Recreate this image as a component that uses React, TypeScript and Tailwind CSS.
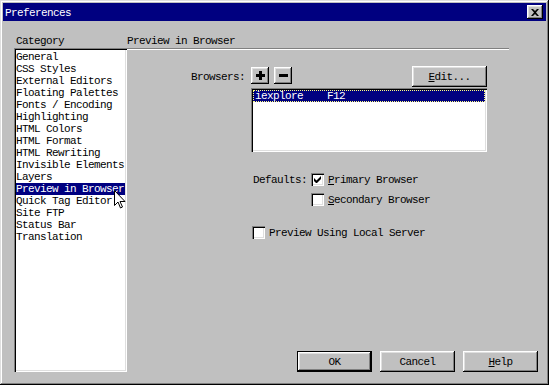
const raised =
  "shadow-[inset_-1px_-1px_#000,inset_1px_1px_#fff,inset_-2px_-2px_#808080,inset_2px_2px_#dfdfdf]";
const sunken =
  "shadow-[inset_1px_1px_#808080,inset_2px_2px_#000,inset_-1px_-1px_#fff,inset_-2px_-2px_#dfdfdf]";

const categories = [
  "General",
  "CSS Styles",
  "External Editors",
  "Floating Palettes",
  "Fonts / Encoding",
  "Highlighting",
  "HTML Colors",
  "HTML Format",
  "HTML Rewriting",
  "Invisible Elements",
  "Layers",
  "Preview in Browser",
  "Quick Tag Editor",
  "Site FTP",
  "Status Bar",
  "Translation",
];

function Checkbox({ checked }: { checked?: boolean }) {
  return (
    <div className={`relative h-[13px] w-[13px] shrink-0 bg-white ${sunken}`}>
      {checked && (
        <svg className="absolute left-[3px] top-[3px]" width="7" height="7" viewBox="0 0 7 7">
          <path d="M0 2v3l2 2h1l4-4V0L2.5 4.5z" fill="#000" />
        </svg>
      )}
    </div>
  );
}

function Button({ children, isDefault }: { children: React.ReactNode; isDefault?: boolean }) {
  return (
    <div
      className={`flex h-[21px] w-[75px] items-center justify-center bg-[#c0c0c0] pt-[1px] ${
        isDefault ? "border border-black" : ""
      } ${raised}`}
    >
      {children}
    </div>
  );
}

export default function App() {
  return (
    <div className="relative flex h-[385px] w-[549px] flex-col bg-[#c0c0c0] p-[3px] font-['Liberation_Mono',monospace] text-[11px] leading-[12px] tracking-[-0.6px] text-black shadow-[inset_-1px_-1px_#000,inset_1px_1px_#dfdfdf,inset_-2px_-2px_#808080,inset_2px_2px_#fff]">
      {/* title bar */}
      <div className="flex h-[18px] items-center justify-between bg-[#000080] pl-[2px] pr-[3px] text-white">
        <span className="pt-[1px]">Preferences</span>
        <div className={`flex h-[14px] w-[16px] items-center justify-center bg-[#c0c0c0] ${raised}`}>
          <svg width="8" height="7" viewBox="0 0 8 7">
            <path d="M0 0h2l2 2 2-2h2L5 3.5 8 7H6L4 5 2 7H0l3-3.5z" fill="#000" />
          </svg>
        </div>
      </div>

      <div className="flex flex-1">
        {/* category column */}
        <div className="ml-[11px] flex flex-col pt-[13px]">
          <div className="h-[12px] pl-[2px] pt-[1px]">Category</div>
          <div className={`mt-[2px] h-[324px] w-[113px] bg-white px-[2px] pt-[3px] ${sunken}`}>
            {categories.map((c) => (
              <div
                key={c}
                className={`h-[12px] whitespace-nowrap ${
                  c === "Preview in Browser" ? "bg-[#000080] text-white" : ""
                }`}
              >
                {c}
              </div>
            ))}
          </div>
        </div>

        {/* settings panel */}
        <div className="flex flex-1 flex-col pt-[13px]">
          <div className="h-[12px] pt-[1px]">Preview in Browser</div>
          <div className="mt-[2px] h-[2px] w-[382px] border-t border-b border-t-[#808080] border-b-white" />

          <div className="mt-[16px] flex h-[21px] items-start">
            <div className="mt-[5px] w-[118px] text-right">Browsers:</div>
            <div className={`ml-[6px] mt-[1px] flex h-[17px] w-[18px] items-center justify-center ${raised}`}>
              <svg width="9" height="9" viewBox="0 0 9 9">
                <path d="M3 0h3v3h3v3H6v3H3V6H0V3h3z" fill="#000" />
              </svg>
            </div>
            <div className={`ml-[5px] mt-[1px] flex h-[17px] w-[18px] items-center justify-center ${raised}`}>
              <svg width="9" height="3" viewBox="0 0 9 3">
                <path d="M0 0h9v3H0z" fill="#000" />
              </svg>
            </div>
            <div className={`ml-[120px] flex h-[21px] w-[75px] items-center justify-center pt-[1px] ${raised}`}>
              <span>
                <span className="underline">E</span>dit...
              </span>
            </div>
          </div>

          <div className={`ml-[124px] mt-[1px] h-[64px] w-[236px] bg-white p-[2px] ${sunken}`}>
            <div className="h-[12px] whitespace-pre border border-dotted border-[#ffff80] bg-[#000080] pl-[1px] leading-[11px] text-white">
              {"iexplore    F12"}
            </div>
          </div>

          <div className="mt-[21px] flex items-center">
            <div className="ml-[126px] w-[58px] pt-[1px]">Defaults:</div>
            <Checkbox checked />
            <div className="ml-[4px] pt-[1px]">
              <span className="underline">P</span>rimary Browser
            </div>
          </div>
          <div className="mt-[7px] flex items-center">
            <div className="ml-[184px]" />
            <Checkbox />
            <div className="ml-[4px] pt-[1px]">
              <span className="underline">S</span>econdary Browser
            </div>
          </div>
          <div className="mt-[20px] flex items-center">
            <div className="ml-[125px]" />
            <Checkbox />
            <div className="ml-[4px] pt-[1px]">Preview Using Local Server</div>
          </div>

          <div className="mt-auto flex justify-end gap-[8px] pb-[10px] pr-[8px]">
            <Button isDefault>OK</Button>
            <Button>Cancel</Button>
            <Button>
              <span>
                <span className="underline">H</span>elp
              </span>
            </Button>
          </div>
        </div>
      </div>

      {/* mouse cursor */}
      <svg className="absolute left-[114px] top-[190px]" width="12" height="19" viewBox="0 0 12 19">
        <path
          d="M0.5 0.5v15l3.5-3.5 2.5 6 2-1-2.5-5.5h5z"
          fill="#fff"
          stroke="#000"
          strokeWidth="1"
          strokeLinejoin="miter"
        />
      </svg>
    </div>
  );
}
